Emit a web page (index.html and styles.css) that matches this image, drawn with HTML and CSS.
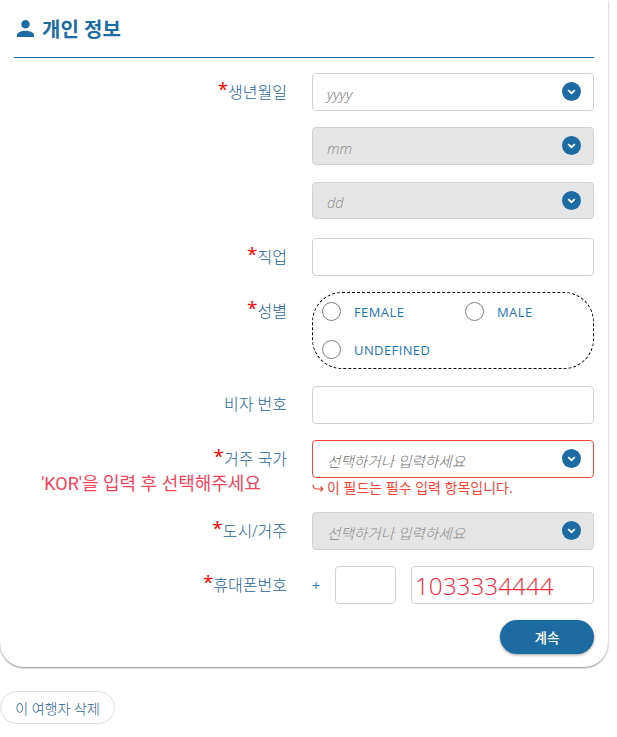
FILE: index.html
```html
<!DOCTYPE html>
<html lang="ko">
<head>
    <meta charset="UTF-8">
    <meta name="viewport" content="width=device-width, initial-scale=1.0">
    <title>개인 정보</title>
    <link rel="stylesheet" href="styles.css">
</head>
<body>
    <div class="card">
        <h2 class="title">
            <svg class="person" viewBox="4 4 16 16"><path d="M12 12c2.2 0 4-1.8 4-4s-1.8-4-4-4-4 1.800-4 4 1.800 4 4 4zm0 2c-2.700 0-8 1.300-8 4v2h16v-2c0-2.700-5.300-4-8-4z"/></svg>
            개인 정보
        </h2>

        <div class="row row-first">
            <div class="label"><span class="req">*</span>생년월일</div>
            <div class="field">
                <span class="ph">yyyy</span>
                <svg class="chev" viewBox="0 0 20 20"><circle cx="10" cy="10" r="10"/><path d="M6.500 8.500 10 11.800l3.500-3.300"/></svg>
            </div>
        </div>
        <div class="row row-mm">
            <div class="label"></div>
            <div class="field off">
                <span class="ph">mm</span>
                <svg class="chev" viewBox="0 0 20 20"><circle cx="10" cy="10" r="10"/><path d="M6.500 8.500 10 11.800l3.500-3.300"/></svg>
            </div>
        </div>
        <div class="row row-dd">
            <div class="label"></div>
            <div class="field off">
                <span class="ph">dd</span>
                <svg class="chev" viewBox="0 0 20 20"><circle cx="10" cy="10" r="10"/><path d="M6.500 8.500 10 11.800l3.500-3.300"/></svg>
            </div>
        </div>
        <div class="row">
            <div class="label"><span class="req">*</span>직업</div>
            <div class="field"></div>
        </div>
        <div class="row">
            <div class="label"><span class="req">*</span>성별</div>
            <div class="radios">
                <div class="radio"><span class="dot"></span>FEMALE</div>
                <div class="radio"><span class="dot"></span>MALE</div>
                <div class="radio"><span class="dot"></span>UNDEFINED</div>
            </div>
        </div>
        <div class="row row-visa">
            <div class="label">비자 번호</div>
            <div class="field"></div>
        </div>
        <div class="row">
            <div class="label">
                <span class="req">*</span>거주 국가
                <div class="hint">'KOR'을 입력 후 선택해주세요</div>
            </div>
            <div>
                <div class="field err">
                    <span class="ph">선택하거나 입력하세요</span>
                    <svg class="chev" viewBox="0 0 20 20"><circle cx="10" cy="10" r="10"/><path d="M6.500 8.500 10 11.800l3.500-3.300"/></svg>
                </div>
                <div class="err-msg">
                    <svg class="err-arrow" viewBox="0 0 12 10"><path d="M1 2.500c0 3 1.500 4.500 4 4.500h6M8.500 4.500 11 7 8.500 9.500"/></svg>
                    이 필드는 필수 입력 항목입니다.
                </div>
            </div>
        </div>
        <div class="row">
            <div class="label"><span class="req">*</span>도시/거주</div>
            <div class="field off">
                <span class="ph">선택하거나 입력하세요</span>
                <svg class="chev" viewBox="0 0 20 20"><circle cx="10" cy="10" r="10"/><path d="M6.500 8.500 10 11.800l3.500-3.300"/></svg>
            </div>
        </div>
        <div class="row">
            <div class="label"><span class="req">*</span>휴대폰번호</div>
            <div class="phone">
                <span class="plus">+</span>
                <div class="field code"></div>
                <div class="field number">1033334444</div>
            </div>
        </div>
        <div class="actions">
            <button class="next">계속</button>
        </div>
    </div>
    <button class="remove">이 여행자 삭제</button>
</body>
</html>
```

FILE: styles.css
```css
* {
    box-sizing: border-box;
}
body {
    margin: 0;
    background: #fff;
    font-family: "Open Sans", "Noto Sans CJK KR", sans-serif;
    color: #1c6ca3;
}
.card {
    width: 608px;
    height: 667px;
    padding: 0 14px;
    background: #fff;
    border-radius: 0 0 24px 24px;
    box-shadow: 0 1px 2px rgba(0, 0, 0, 0.45);
}
.title {
    display: flex;
    align-items: center;
    gap: 8px;
    height: 58px;
    margin: 0;
    padding: 0 0 0 3px;
    border-bottom: 1px solid #1c6ca3;
    font-size: 20px;
    font-weight: 700;
}
.person {
    width: 17px;
    height: 17px;
    fill: #1c6ca3;
}
.row {
    display: grid;
    grid-template-columns: 273px 282px;
    column-gap: 25px;
    margin-top: 16px;
}
.row-first {
    margin-top: 15px;
}
.row-dd {
    margin-top: 17px;
}
.row-dd .field {
    height: 37px;
}
.row-dd + .row {
    margin-top: 19px;
}
.row-visa {
    margin-top: 17px;
}
.label {
    padding-top: 7px;
    text-align: right;
    font-size: 16px;
    font-weight: 300;
    line-height: 22px;
    color: #1f6395;
}
.req {
    color: #f00;
    font-size: 19px;
    font-weight: 400;
    line-height: 1;
    vertical-align: 2px;
}
.hint {
    margin-top: 3px;
    padding-right: 26px;
    font-size: 18px;
    font-weight: 400;
    line-height: 22px;
    color: #f2455c;
    font-family: "Roboto", "Noto Sans CJK KR", sans-serif;
}
.field {
    display: flex;
    align-items: center;
    justify-content: space-between;
    height: 38px;
    padding: 0 12px 0 14px;
    background: #fff;
    border: 1px solid #d2d2d2;
    border-radius: 4px;
}
.field.off {
    background: #e5e5e5;
}
.field.err {
    border-color: #f44336;
}
.ph {
    padding-top: 3px;
    font-size: 14.6px;
    font-weight: 300;
    font-style: italic;
    color: #6f6f6f;
}
.off .ph {
    color: #8c8c8c;
}
.chev {
    flex: none;
    width: 19px;
    height: 19px;
    margin-top: -1px;
}
.chev circle {
    fill: #1c6ca3;
}
.chev path {
    fill: none;
    stroke: #fff;
    stroke-width: 2;
}
.radios {
    display: grid;
    grid-template-columns: 143px 1fr;
    row-gap: 19px;
    align-content: start;
    height: 77px;
    padding: 9px 0 0 9px;
    border: 1px dashed #000;
    border-radius: 30px;
}
.radio {
    display: flex;
    align-items: center;
    gap: 13px;
    height: 19px;
    font-size: 13px;
    letter-spacing: 0.4px;
    color: #1c75b5;
}
.dot {
    width: 19px;
    height: 19px;
    background: #fff;
    border: 1px solid #808080;
    border-radius: 50%;
}
.err-msg {
    display: flex;
    align-items: center;
    gap: 3px;
    height: 18px;
    font-size: 14px;
    color: #f44336;
}
.err-arrow {
    flex: none;
    width: 12px;
    height: 10px;
    fill: none;
    stroke: #f44336;
    stroke-width: 1.200;
}
.phone {
    display: flex;
    align-items: center;
}
.plus {
    width: 23px;
    font-size: 14px;
    color: #1c75b5;
}
.code {
    width: 61px;
}
.number {
    width: 183px;
    margin-left: 15px;
    padding: 0 0 0 3px;
    justify-content: flex-start;
    font-size: 24.3px;
    font-weight: 300;
    color: #f5233a;
}
.actions {
    display: flex;
    justify-content: flex-end;
    width: 580px;
    margin-top: 16px;
}
.next {
    width: 94px;
    height: 34px;
    border: none;
    border-radius: 17px;
    background: #1c6ca3;
    color: #fff;
    font-family: inherit;
    font-size: 13.5px;
    font-weight: 500;
    box-shadow: 0 1px 3px rgba(0, 0, 0, 0.4);
}
.remove {
    display: block;
    width: 115px;
    height: 33px;
    margin-top: 24px;
    padding: 0;
    background: #fff;
    border: 1px solid #ddd;
    border-radius: 17px;
    font-family: inherit;
    font-size: 14px;
    font-weight: 300;
    color: #1f6395;
}
```
